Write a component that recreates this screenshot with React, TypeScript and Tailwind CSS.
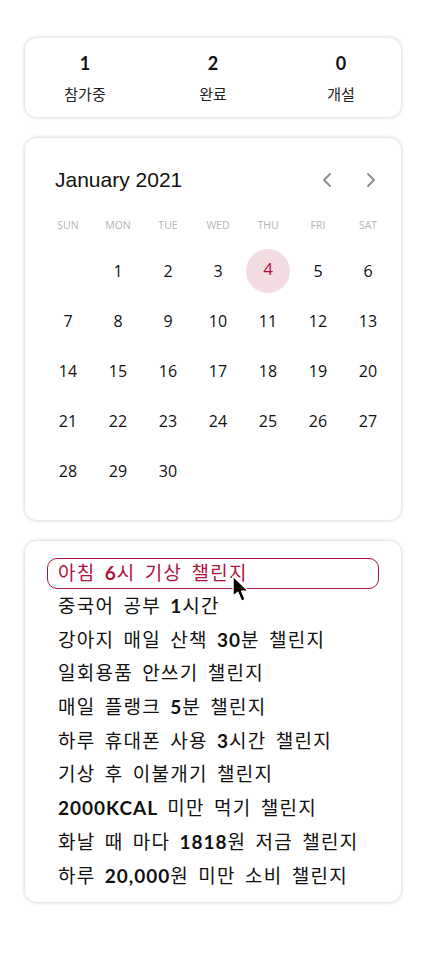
import React from 'react';
import { ChevronLeft, ChevronRight } from 'lucide-react';

const STATS = [
  { count: 1, label: '참가중' },
  { count: 2, label: '완료' },
  { count: 0, label: '개설' },
];

const WEEKDAYS = ['SUN', 'MON', 'TUE', 'WED', 'THU', 'FRI', 'SAT'];

// the screenshot's month starts on Monday
const DAYS: (number | null)[] = [null, ...Array.from({ length: 30 }, (_, i) => i + 1)];

const b = 'font-bold tracking-[1px]';

const CHALLENGES: React.ReactNode[] = [
  <>아침 <b className={b}>6</b>시 기상 챌린지</>,
  <>중국어 공부 <b className={b}>1</b>시간</>,
  <>강아지 매일 산책 <b className={b}>30</b>분 챌린지</>,
  <>일회용품 안쓰기 챌린지</>,
  <>매일 플랭크 <b className={b}>5</b>분 챌린지</>,
  <>하루 휴대폰 사용 <b className={b}>3</b>시간 챌린지</>,
  <>기상 후 이불개기 챌린지</>,
  <><b className={b}>2000KCAL</b> 미만 먹기 챌린지</>,
  <>화날 때 마다 <b className={b}>1818</b>원 저금 챌린지</>,
  <>하루 <b className={b}>20,000</b>원 미만 소비 챌린지</>,
];

const card = 'rounded-xl bg-white shadow-[0_0_4px_rgba(0,0,0,0.22)]';
const listFont = "font-['Lato','Noto_Sans_CJK_KR',sans-serif]";

function Cursor() {
  return (
    <svg
      className="absolute left-[184px] top-[16px]"
      width="19"
      height="29"
      viewBox="0 0 18 27"
    >
      <path
        d="M1 1 L1 20 L5.5 16 L9 24.5 L12.5 23 L9 15 L15.5 15 Z"
        fill="#000"
        stroke="#fff"
        strokeWidth="1.3"
        strokeLinejoin="round"
      />
    </svg>
  );
}

export default function App() {
  return (
    <div className="min-h-[953px] w-[426px] bg-white px-[25px] pt-[38px] font-['Noto_Sans_CJK_KR',sans-serif] text-[#111]">
      <div className="flex flex-col gap-[21px]">
        <div className={`${card} flex h-[79px] items-center justify-between px-[33px]`}>
          {STATS.map((s) => (
            <div key={s.label} className="flex w-[54px] flex-col items-center">
              <span className={`${listFont} text-[18px] font-bold leading-[26px]`}>{s.count}</span>
              <span className="mt-[7px] text-[15px] leading-[22px] text-[#222]">{s.label}</span>
            </div>
          ))}
        </div>

        <div className={`${card} pb-[24px] pl-[18px] pr-[8px] pt-[26px]`}>
          <div className="flex items-center justify-between pl-[12px] pr-[10px]">
            <h2 className="font-['Liberation_Sans',sans-serif] text-[21px] leading-[32px] text-[#111]">
              January 2021
            </h2>
            <div className="flex items-center gap-[20px] text-[#8f8f8f]">
              <ChevronLeft className="h-[24px] w-[24px]" strokeWidth={2} />
              <ChevronRight className="h-[24px] w-[24px]" strokeWidth={2} />
            </div>
          </div>

          <div className="mt-[19px] grid grid-cols-7">
            {WEEKDAYS.map((w) => (
              <div
                key={w}
                className="text-center font-['Open_Sans',sans-serif] text-[10.5px] leading-[20px] text-[#b5b5b5]"
              >
                {w}
              </div>
            ))}
          </div>

          <div className="mt-[11px] grid grid-cols-7">
            {DAYS.map((d, i) => (
              <div key={i} className="flex h-[50px] items-center justify-center">
                {d !== null &&
                  (d === 4 ? (
                    <span className="flex h-[44px] w-[44px] items-center justify-center rounded-full bg-[#f3dde3] font-['Open_Sans',sans-serif] text-[17px] text-[#b0143c]">
                      <span className="-mt-[5px]">{d}</span>
                    </span>
                  ) : (
                    <span className="font-['Open_Sans',sans-serif] text-[16px] text-[#111]">{d}</span>
                  ))}
              </div>
            ))}
          </div>
        </div>

        <div className={`${card} px-[22px] pb-[10px] pt-[17px]`}>
          <ul className={`${listFont} text-[19px] tracking-[1.3px] text-[#111] [word-spacing:3px]`}>
            {CHALLENGES.map((c, i) =>
              i === 0 ? (
                <li
                  key={i}
                  className="relative h-[31px] rounded-[10px] border border-[#b0143c] pl-[10px] leading-[28px] text-[#b0143c]"
                >
                  <span>{c}</span>
                  <Cursor />
                </li>
              ) : (
                <li key={i} className="h-[33.7px] pl-[11px] leading-[33.7px]">
                  <span>{c}</span>
                </li>
              ),
            )}
          </ul>
        </div>
      </div>
    </div>
  );
}
